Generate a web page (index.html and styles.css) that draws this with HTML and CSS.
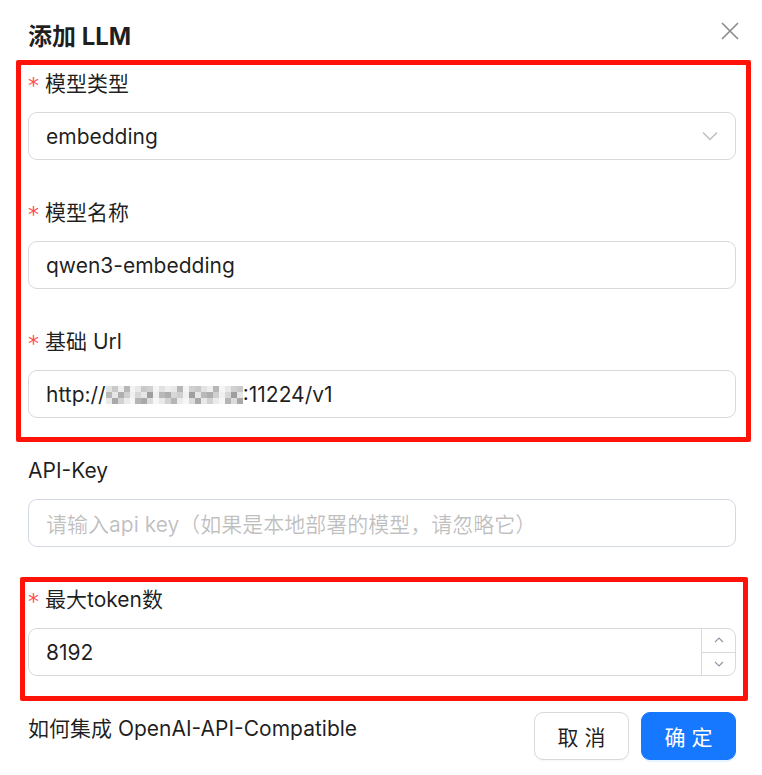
FILE: index.html
```html
<!DOCTYPE html>
<html lang="zh-CN">
<head>
<meta charset="utf-8">
<title>添加 LLM</title>
<link rel="stylesheet" href="styles.css">
</head>
<body>
<div class="modal">
  <header class="head">
    <h1 class="title">添加 LLM</h1>
    <button class="close" type="button" aria-label="关闭">
      <svg width="18" height="18" viewBox="0 0 18 18"><path d="M1 1L17 17M17 1L1 17" stroke="#8c8c8c" stroke-width="1.7" fill="none"/></svg>
    </button>
  </header>
  <form class="form">
    <div class="item">
      <label class="label"><span class="req">*</span>模型类型</label>
      <div class="control select">
        <span class="value">embedding</span>
        <svg class="arrow" width="16" height="10" viewBox="0 0 16 10"><path d="M1 1.5L8 8.5L15 1.5" stroke="#bfbfbf" stroke-width="1.5" fill="none"/></svg>
      </div>
    </div>
    <div class="item">
      <label class="label"><span class="req">*</span>模型名称</label>
      <div class="control"><span class="value">qwen3-embedding</span></div>
    </div>
    <div class="item">
      <label class="label"><span class="req">*</span>基础 Url</label>
      <div class="control"><span class="value">http://<span class="mosaic"><i class="m1"></i><i class="m2"></i><i class="m3"></i><i class="m4"></i><i class="m7"></i><i class="m5"></i><i class="m2"></i><i class="m6"></i><i class="m7"></i><i class="m1"></i><i class="m3"></i><i class="m5"></i><i class="m4"></i><i class="m7"></i><i class="m6"></i><i class="m2"></i><i class="m1"></i><i class="m3"></i><i class="m4"></i><i class="m7"></i><i class="m5"></i><i class="m6"></i><i class="m2"></i></span>:11224/v1</span></div>
    </div>
    <div class="item">
      <label class="label">API-Key</label>
      <div class="control key"><span class="placeholder">请输入api key（如果是本地部署的模型，请忽略它）</span></div>
    </div>
    <div class="item">
      <label class="label"><span class="req">*</span>最大token数</label>
      <div class="control number">
        <span class="value">8192</span>
        <div class="spin">
          <span class="spin-btn"><svg width="10" height="6" viewBox="0 0 10 6"><path d="M1 5L5 1L9 5" stroke="#8a97ab" stroke-width="1.1" fill="none"/></svg></span>
          <span class="spin-btn down"><svg width="10" height="6" viewBox="0 0 10 6"><path d="M1 1L5 5L9 1" stroke="#8a97ab" stroke-width="1.1" fill="none"/></svg></span>
        </div>
      </div>
    </div>
  </form>
  <footer class="foot">
    <span class="help">如何集成 OpenAI-API-Compatible</span>
    <div class="actions">
      <button class="btn" type="button">取 消</button>
      <button class="btn primary" type="button">确 定</button>
    </div>
  </footer>
  <div class="mark mark-a"></div>
  <div class="mark mark-b"></div>
</div>
</body>
</html>
```

FILE: styles.css
```css
* { box-sizing: border-box; }
html, body { margin: 0; padding: 0; background: #ffffff; }
body {
  font-family: Inter, "Noto Sans CJK SC", sans-serif;
  color: rgba(0, 0, 0, 0.88);
  width: 762px;
  height: 775px;
  overflow: hidden;
}
.modal {
  position: relative;
  padding: 19px 26px 0 28px;
}
.head {
  display: flex;
  justify-content: space-between;
  align-items: flex-start;
}
.title {
  margin: 0;
  font-size: 24px;
  line-height: 36px;
  font-weight: 700;
  color: rgba(0, 0, 0, 0.88);
}
.close {
  border: 0;
  background: none;
  padding: 0;
  margin: 3px -3px 0 0;
  width: 18px;
  height: 18px;
  display: flex;
}
.form {
  margin-top: 12px;
  display: flex;
  flex-direction: column;
}
.item { margin-bottom: 36px; display: flex; flex-direction: column; }
.label {
  font-size: 21px;
  line-height: 33px;
  padding-bottom: 12px;
  display: flex;
  align-items: center;
}
.req {
  color: #ff4d4f;
  font-family: "DejaVu Sans", sans-serif;
  font-size: 22px;
  width: 17px;
  margin-left: 0;
  line-height: 1;
  position: relative;
  top: 2px;
}
.control {
  height: 48px;
  border: 1px solid #d9d9d9;
  border-radius: 9px;
  display: flex;
  align-items: center;
  padding: 0 17px;
  font-size: 21px;
  position: relative;
}
.select { justify-content: space-between; }
.arrow { display: block; }
.key { border-color: #d3d9e0; }
.placeholder { color: rgba(0, 0, 0, 0.25); }
.mosaic {
  display: inline-flex;
  height: 18px;
  width: 137px;
  vertical-align: -2px;
}
.mosaic i { flex: 1; height: 100%; display: block; }
.mosaic .m1 { background: linear-gradient(#e2e2e2 0 33%, #b9b9b9 33% 66%, #e9e9e9 66%); }
.mosaic .m2 { background: linear-gradient(#c9c9c9 0 33%, #e6e6e6 33% 66%, #a9a9a9 66%); }
.mosaic .m3 { background: linear-gradient(#eeeeee 0 33%, #aeaeae 33% 66%, #d2d2d2 66%); }
.mosaic .m4 { background: linear-gradient(#b7b7b7 0 33%, #cfcfcf 33% 66%, #ebebeb 66%); }
.mosaic .m5 { background: linear-gradient(#e8e8e8 0 33%, #d7d7d7 33% 66%, #b5b5b5 66%); }
.mosaic .m6 { background: linear-gradient(#d0d0d0 0 33%, #9f9f9f 33% 66%, #dcdcdc 66%); }
.mosaic .m7 { background: linear-gradient(#f4f4f4 0 33%, #f0f0f0 33% 66%, #f6f6f6 66%); }
.number { padding-right: 0; }
.number .value { flex: 1; }
.spin {
  width: 34px;
  align-self: stretch;
  border-left: 1px solid #d9d9d9;
  display: flex;
  flex-direction: column;
}
.spin-btn {
  flex: 1;
  display: flex;
  align-items: center;
  justify-content: center;
}
.spin-btn.down { border-top: 1px solid #d9d9d9; }
.foot {
  display: flex;
  justify-content: space-between;
  align-items: flex-start;
}
.help { font-size: 21px; line-height: 33px; }
.actions { display: flex; gap: 12px; }
.btn {
  height: 48px;
  padding: 0;
  font-size: 21px;
  font-family: Inter, "Noto Sans CJK SC", sans-serif;
  border-radius: 9px;
  border: 1px solid #d9d9d9;
  background: #ffffff;
  color: rgba(0, 0, 0, 0.88);
  box-shadow: 0 2px 0 rgba(0, 0, 0, 0.02);
  width: 95px;
}
.btn.primary {
  background: #1677ff;
  border-color: #1677ff;
  color: #ffffff;
  box-shadow: 0 2px 0 rgba(5, 145, 255, 0.1);
}
.mark {
  position: absolute;
  border: 5px solid #ff1208;
  border-radius: 2px;
  pointer-events: none;
}
.mark-a { left: 16px; top: 60px; width: 735px; height: 382px; }
.mark-b { left: 20px; top: 577px; width: 728px; height: 124px; }
```
